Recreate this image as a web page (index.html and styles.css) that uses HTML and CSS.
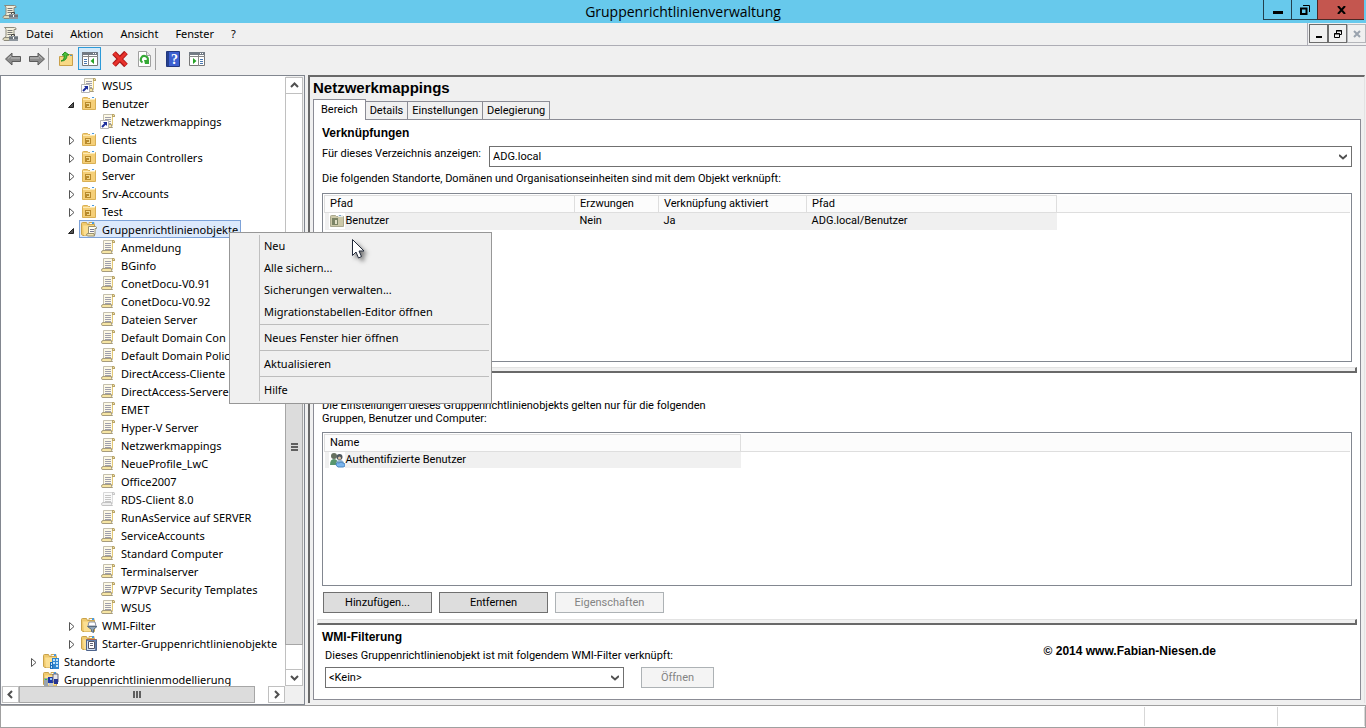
FILE: index.html
```html
<!DOCTYPE html>
<html lang="de">
  <head>
    <meta charset="UTF-8" />
    <meta name="viewport" content="width=device-width, initial-scale=1.0" />
    <title>Gruppenrichtlinienverwaltung</title>
    <link rel="stylesheet" href="styles.css">
  </head>
  <body>
    <svg class="sprite" aria-hidden="true">
      <symbol id="i-console" viewBox="0 0 16 16">
        <path d="M2.500 1.500h10q2 0 1.500 2h-2v9H2q2-1 2-3V3.500q-.5-2-1.500-2z" fill="#f3efdc" stroke="#8d8a7c" />
        <path d="M5.500 4.500h5M5.500 6.500h5M5.500 8.500h4" stroke="#777" />
        <path d="M1 13.500q0-2 2-2h5v3H2z" fill="#ddd8bd" stroke="#8d8a7c" />
        <path d="M9.500 10V8.500h3V10" fill="none" stroke="#444" />
        <path d="M7 10h9v5H7z" fill="#8e969e" /><path d="M7 12h9" stroke="#4d555d" />
        <path d="M11 11h1v2h-1z" fill="#fff" />
      </symbol>
      <symbol id="i-gpo" viewBox="0 0 16 16">
        <path d="M3.500 1.500h9v11h-9z" fill="#fdf9e6" stroke="#c4bfae" />
        <path d="M12 1h2q1.500 1 1 3h-3z" fill="#b9a468" /><path d="M13 2h1v1h-1z" fill="#f1e3ae" />
        <path d="M12.500 4v8" stroke="#e3c877" />
        <path d="M1.500 13.500q0-2 1.500-2h8.500q-.5 2 1 3H3q-1.500 0-1.500-1z" fill="#f6e5a4" stroke="#a79c7c" />
        <path d="M5 4.500h6M5 6.500h6M5 8.500h6M5 10.500h6" stroke="#a09fac" />
      </symbol>
      <symbol id="i-link" viewBox="0 0 16 16">
        <use href="#i-gpo" />
        <path d="M.5 7.500h8v8h-8z" fill="#fff" stroke="#b5b5b5" />
        <path d="M2 14l4-4" stroke="#1d2f9c" stroke-width="2" /><path d="M3 9h4v4z" fill="#1d2f9c" />
      </symbol>
      <symbol id="i-folder" viewBox="0 0 16 16">
        <path d="M.5 2.500q0-1 1-1h4l1 2h7v11H2l-1.500-1z" fill="#f0ca6e" stroke="#c9a24a" />
        <path d="M2 4.500h11v10H3z" fill="#fbdf92" />
        <path d="M8 1.500h5v2H8z" fill="#f7fbff" stroke="#d0a850" /><path d="M11 1h2v2h-2z" fill="#4a9ade" />
      </symbol>
      <symbol id="i-ou" viewBox="0 0 16 16">
        <path d="M1.500 3.500q0-1 1-1h4l1 1h7v11h-13z" fill="#f5cf78" stroke="#d9b055" />
        <path d="M9 2h5v2H9z" fill="#f7fbff" /><path d="M11 2h2v1h-2z" fill="#4a9ade" />
        <path d="M2 4.500h12" stroke="#fdeab4" />
        <path d="M4 7h6v6H4z" fill="#b88a2c" /><path d="M5 8h4v1H5zM8 9h1v3H6v-1h2z" fill="#f3d88c" />
      </symbol>
      <symbol id="i-ougrey" viewBox="0 0 16 16">
        <path d="M1.500 3.500q0-1 1-1h4l1 1h7v10h-13z" fill="#cbc8a8" stroke="#aaa88e" />
        <path d="M9 2h5v2H9z" fill="#e8edf0" /><path d="M10 2h2v1h-2z" fill="#7fa5c0" />
        <path d="M3 5h6v7H3z" fill="#7c8466" /><path d="M6 7h2v4H6z" fill="#e2e0c8" />
      </symbol>
      <symbol id="i-gpofolder" viewBox="0 0 16 16">
        <use href="#i-folder" />
        <path d="M7.500 5.500h7q1.500.5 1 2h-1.500v6H7.500z" fill="#fffdf3" stroke="#99906f" />
        <path d="M9 8.500h4M9 10.500h4" stroke="#777a94" />
        <path d="M5.500 14q0-1.500 1.500-1.500h6q0 1.500.5 2.500h-7z" fill="#f0e4b4" stroke="#99906f" />
      </symbol>
      <symbol id="i-wmi" viewBox="0 0 16 16">
        <use href="#i-folder" />
        <path d="M8 5h6l1 4H7z" fill="#fff" stroke="#8a90a0" />
        <path d="M6.500 9.500h9.500l-3.500 3v3l-2-1v-2z" fill="#8fa4b8" stroke="#596b7e" />
      </symbol>
      <symbol id="i-starter" viewBox="0 0 16 16">
        <use href="#i-folder" />
        <path d="M5.500 4.500h10v11h-10z" fill="#5f7fae" stroke="#4f648c" /><path d="M6 4.500h9" stroke="#b0604e" />
        <path d="M6 6h8v9H6z" fill="#cfdff2" /><path d="M7.500 6.500h6v7h-6z" fill="#fff" stroke="#556" /><path d="M9 8.500h3M9 10.500h3" stroke="#667" />
      </symbol>
      <symbol id="i-sites" viewBox="0 0 16 16">
        <use href="#i-folder" />
        <path d="M9 5h7v11H9z" fill="#2f86cf" /><path d="M7 9h3v7H7z" fill="#1d6db8" />
        <path d="M10 6h2v2h-2zM13 6h2v2h-2zM10 9h2v2h-2zM13 9h2v2h-2zM8 10h1v2H8zM8 13h1v2H8zM13 12h2v2h-2z" fill="#bfe2fa" />
      </symbol>
      <symbol id="i-model" viewBox="0 0 16 16">
        <use href="#i-folder" />
        <path d="M1 7h4v8H1z" fill="#9aa4ae" /><path d="M2 8h2v1H2z" fill="#3c3" />
        <path d="M5 6h5v6H5z" fill="#1c36a8" /><path d="M7 7h2v2H7z" fill="#8fc2ff" />
        <path d="M10 3h5v8h-5z" fill="#e8e8ee" stroke="#667" /><path d="M11 8h4v5h-4z" fill="#26348f" /><path d="M6 12h4v3H6z" fill="#c2c8d0" />
      </symbol>
      <symbol id="i-users" viewBox="0 0 16 16">
        <circle cx="5" cy="4" r="3" fill="#66705f" /><path d="M1 13q0-6 4-6t4 6z" fill="#58966d" />
        <circle cx="10.500" cy="5" r="3" fill="#4e5860" /><circle cx="10.500" cy="6" r="1.500" fill="#dfc4a4" />
        <path d="M7 12q0-4 4-4t4 4z" fill="#8cb0cf" />
        <path d="M7 12q1-2 3-1 2-2 4 0 2 0 2 2t-2 2H9q-2-1-2-3z" fill="#7ab5ed" stroke="#4a86c0" />
      </symbol>
      <symbol id="i-closed" viewBox="0 0 12 12"><path d="M4.500 1.500v8l4.500-4z" fill="#fff" stroke="#555" /></symbol>
      <symbol id="i-open" viewBox="0 0 12 12"><path d="M8.500 3.500v5h-5z" fill="#555" stroke="#222" /></symbol>
      <symbol id="i-up" viewBox="0 0 9 9"><path d="M1 6l3.500-3.500L8 6" fill="none" stroke="#505050" stroke-width="2" /></symbol>
    </svg>

    <div class="window">
      <header class="titlebar">
        <svg class="icon"><use href="#i-console" /></svg>
        <h1>Gruppenrichtlinienverwaltung</h1>
        <div class="win-buttons">
          <button class="win-min" aria-label="Minimieren"><svg width="10" height="10"><path d="M0 6h10v3H0z" /></svg></button>
          <button class="win-restore" aria-label="Verkleinern"><svg width="10" height="10" fill="none" stroke="#000"><path d="M1 3.500h5.500V9H1z" stroke-width="2" /><path d="M3 .5h6.500V7" /></svg></button>
          <button class="win-close" aria-label="Schließen"><svg width="9" height="8"><path d="M1 0l7 8M8 0L1 8" stroke="#000" stroke-width="2" /></svg></button>
        </div>
      </header>

      <nav class="menubar">
        <svg class="icon"><use href="#i-console" /></svg>
        <div class="menus">
          <button>Datei</button>
          <button>Aktion</button>
          <button>Ansicht</button>
          <button>Fenster</button>
          <button>?</button>
        </div>
        <div class="mdi-buttons">
          <button aria-label="Fenster minimieren"><svg width="8" height="8"><path d="M1 6h6v2H1z" /></svg></button>
          <button aria-label="Fenster wiederherstellen"><svg width="8" height="8" fill="none" stroke="#000"><path d="M2.500 3V.5h5v4H6M2 1h6" /><path d="M.5 3.500h5v4h-5zM0 4h6" /></svg></button>
          <button aria-label="Fenster schließen" disabled><svg width="8" height="8"><path d="M1 1l6 6M7 1L1 7" stroke="#9aa3ae" stroke-width="2" /></svg></button>
        </div>
      </nav>

      <div class="toolbar">
        <button aria-label="Zurück"><svg class="icon"><path d="M.5 8L7 2v3.500h8.500v5H7V14z" fill="#8c8c8c" stroke="#5c5c5c" /><path d="M3 7.500L6 5M6 7h9" stroke="#bbb" /></svg></button>
        <button aria-label="Vorwärts"><svg class="icon"><path d="M15.500 8L9 2v3.500H.5v5H9V14z" fill="#8c8c8c" stroke="#5c5c5c" /><path d="M13 7.500L10 5M1 7h9" stroke="#bbb" /></svg></button>
        <span class="tool-sep"></span>
        <button aria-label="Eine Ebene nach oben"><svg class="icon"><path d="M1.500 5.500h6l1-2h6v11h-13z" fill="#f8d986" stroke="#c9a04a" /><path d="M12 4h2v1h-2z" fill="#4a9ade" /><path d="M3 10q4-1 3-6H4l3-3 4 3H9q0 6-6 6z" fill="#4cc03a" stroke="#279020" /></svg></button>
        <button class="pressed" aria-label="Konsolenstruktur einblenden"><svg class="icon"><path d="M.5 1.500h15v13H.5z" fill="#fff" stroke="#777" /><path d="M0 1h16v3H0z" fill="#737b84" /><path d="M11 2h1v1h-1zM13 2h1v1h-1z" fill="#fff" /><path d="M6.500 4v11M0 5.500h16" stroke="#888" /><path d="M2 8.500h3M2 10.500h3M2 12.500h3" stroke="#4a78b0" /><path d="M12 7v6L8.500 10z" fill="#26a326" /></svg></button>
        <span class="tool-gap"></span>
        <button aria-label="Löschen"><svg class="icon"><path d="M2 2l12 12.500M14 1.500L2 14" stroke="#a81616" stroke-width="5" /><path d="M2 2l12 12M14 2L2 14" stroke="#e8322c" stroke-width="3" /></svg></button>
        <button aria-label="Aktualisieren"><svg class="icon"><path d="M2.500.5h8l4 4v11h-12z" fill="#fff" stroke="#a0a0a0" /><path d="M10.500.5v4h4" fill="#e6e6e6" stroke="#a0a0a0" /><path d="M6.500 11.500A3.500 3.500 0 1 1 11.500 10" fill="none" stroke="#35a935" stroke-width="2" /><path d="M8 9h5v4H9z" fill="#35a935" /></svg></button>
        <span class="tool-sep"></span>
        <button aria-label="Hilfe"><svg class="icon"><path d="M1.500.5h13v15h-13z" fill="#3c5fd0" stroke="#22377e" /><path d="M2 1h2v14H2z" fill="#24408f" /><text class="help-mark" x="6" y="13">?</text></svg></button>
        <button aria-label="Aktionsbereich einblenden"><svg class="icon"><path d="M.5 1.500h15v13H.5z" fill="#fff" stroke="#777" /><path d="M0 1h16v3H0z" fill="#737b84" /><path d="M11 2h1v1h-1zM13 2h1v1h-1z" fill="#fff" /><path d="M9.500 4v11M0 5.500h16" stroke="#888" /><path d="M11 8.500h3M11 10.500h3M11 12.500h3" stroke="#4a78b0" /><path d="M4 7v6l3.500-3z" fill="#26a326" /></svg></button>
      </div>

      <main class="content">
        <aside class="tree-pane">
          <ul class="tree" role="tree">
            <li class="lvl2"><span class="label"><svg class="icon"><use href="#i-link" /></svg>WSUS</span></li>
            <li class="lvl2"><svg class="arrow"><use href="#i-open" /></svg><span class="label"><svg class="icon"><use href="#i-ou" /></svg>Benutzer</span></li>
            <li class="lvl3"><span class="label"><svg class="icon"><use href="#i-link" /></svg>Netzwerkmappings</span></li>
            <li class="lvl2"><svg class="arrow"><use href="#i-closed" /></svg><span class="label"><svg class="icon"><use href="#i-ou" /></svg>Clients</span></li>
            <li class="lvl2"><svg class="arrow"><use href="#i-closed" /></svg><span class="label"><svg class="icon"><use href="#i-ou" /></svg>Domain Controllers</span></li>
            <li class="lvl2"><svg class="arrow"><use href="#i-closed" /></svg><span class="label"><svg class="icon"><use href="#i-ou" /></svg>Server</span></li>
            <li class="lvl2"><svg class="arrow"><use href="#i-closed" /></svg><span class="label"><svg class="icon"><use href="#i-ou" /></svg>Srv-Accounts</span></li>
            <li class="lvl2"><svg class="arrow"><use href="#i-closed" /></svg><span class="label"><svg class="icon"><use href="#i-ou" /></svg>Test</span></li>
            <li class="lvl2"><svg class="arrow"><use href="#i-open" /></svg><span class="label selected"><svg class="icon"><use href="#i-gpofolder" /></svg>Gruppenrichtlinienobjekte</span></li>
            <li class="lvl3"><span class="label"><svg class="icon"><use href="#i-gpo" /></svg>Anmeldung</span></li>
            <li class="lvl3"><span class="label"><svg class="icon"><use href="#i-gpo" /></svg>BGinfo</span></li>
            <li class="lvl3"><span class="label"><svg class="icon"><use href="#i-gpo" /></svg>ConetDocu-V0.91</span></li>
            <li class="lvl3"><span class="label"><svg class="icon"><use href="#i-gpo" /></svg>ConetDocu-V0.92</span></li>
            <li class="lvl3"><span class="label"><svg class="icon"><use href="#i-gpo" /></svg>Dateien Server</span></li>
            <li class="lvl3"><span class="label"><svg class="icon"><use href="#i-gpo" /></svg>Default Domain Con</span></li>
            <li class="lvl3"><span class="label"><svg class="icon"><use href="#i-gpo" /></svg>Default Domain Polic</span></li>
            <li class="lvl3"><span class="label"><svg class="icon"><use href="#i-gpo" /></svg>DirectAccess-Cliente</span></li>
            <li class="lvl3"><span class="label"><svg class="icon"><use href="#i-gpo" /></svg>DirectAccess-Servere</span></li>
            <li class="lvl3"><span class="label"><svg class="icon"><use href="#i-gpo" /></svg>EMET</span></li>
            <li class="lvl3"><span class="label"><svg class="icon"><use href="#i-gpo" /></svg>Hyper-V Server</span></li>
            <li class="lvl3"><span class="label"><svg class="icon"><use href="#i-gpo" /></svg>Netzwerkmappings</span></li>
            <li class="lvl3"><span class="label"><svg class="icon"><use href="#i-gpo" /></svg>NeueProfile_LwC</span></li>
            <li class="lvl3"><span class="label"><svg class="icon"><use href="#i-gpo" /></svg>Office2007</span></li>
            <li class="lvl3"><span class="label"><svg class="icon off"><use href="#i-gpo" /></svg>RDS-Client 8.0</span></li>
            <li class="lvl3"><span class="label"><svg class="icon"><use href="#i-gpo" /></svg>RunAsService auf SERVER</span></li>
            <li class="lvl3"><span class="label"><svg class="icon"><use href="#i-gpo" /></svg>ServiceAccounts</span></li>
            <li class="lvl3"><span class="label"><svg class="icon"><use href="#i-gpo" /></svg>Standard Computer</span></li>
            <li class="lvl3"><span class="label"><svg class="icon"><use href="#i-gpo" /></svg>Terminalserver</span></li>
            <li class="lvl3"><span class="label"><svg class="icon"><use href="#i-gpo" /></svg>W7PVP Security Templates</span></li>
            <li class="lvl3"><span class="label"><svg class="icon"><use href="#i-gpo" /></svg>WSUS</span></li>
            <li class="lvl2"><svg class="arrow"><use href="#i-closed" /></svg><span class="label"><svg class="icon"><use href="#i-wmi" /></svg>WMI-Filter</span></li>
            <li class="lvl2"><svg class="arrow"><use href="#i-closed" /></svg><span class="label"><svg class="icon"><use href="#i-starter" /></svg>Starter-Gruppenrichtlinienobjekte</span></li>
            <li class="lvl1"><svg class="arrow"><use href="#i-closed" /></svg><span class="label"><svg class="icon"><use href="#i-sites" /></svg>Standorte</span></li>
            <li class="lvl1"><span class="label"><svg class="icon"><use href="#i-model" /></svg>Gruppenrichtlinienmodellierung</span></li>
          </ul>
          <div class="vscroll">
            <button aria-label="Nach oben"><svg width="9" height="9"><use href="#i-up" /></svg></button>
            <div class="vthumb"><i></i><i></i><i></i></div>
            <button aria-label="Nach unten"><svg class="down" width="9" height="9"><use href="#i-up" /></svg></button>
          </div>
          <div class="hscroll">
            <button aria-label="Nach links"><svg class="left" width="9" height="9"><use href="#i-up" /></svg></button>
            <div class="hthumb"><i></i><i></i><i></i></div>
            <button aria-label="Nach rechts"><svg class="right" width="9" height="9"><use href="#i-up" /></svg></button>
          </div>
        </aside>

        <section class="detail">
          <h2>Netzwerkmappings</h2>
          <div class="tabs" role="tablist">
            <button class="active" role="tab">Bereich</button>
            <button role="tab">Details</button>
            <button role="tab">Einstellungen</button>
            <button role="tab">Delegierung</button>
          </div>
          <div class="panel">
            <div class="block links">
              <h3>Verknüpfungen</h3>
              <div class="field">
                <label for="location">Für dieses Verzeichnis anzeigen:</label>
                <select id="location"><option>ADG.local</option></select>
              </div>
              <p>Die folgenden Standorte, Domänen und Organisationseinheiten sind mit dem Objekt verknüpft:</p>
              <div class="list">
                <table>
                  <colgroup><col class="c-path"><col class="c-forced"><col class="c-active"><col class="c-path"><col></colgroup>
                  <thead>
                    <tr><th>Pfad</th><th>Erzwungen</th><th>Verknüpfung aktiviert</th><th>Pfad</th><td></td></tr>
                  </thead>
                  <tbody>
                    <tr>
                      <td><span class="item"><svg class="icon"><use href="#i-ougrey" /></svg>Benutzer</span></td>
                      <td>Nein</td><td>Ja</td><td>ADG.local/Benutzer</td><td></td>
                    </tr>
                  </tbody>
                </table>
              </div>
            </div>
            <div class="splitter"></div>
            <div class="block security">
              <p>Die Einstellungen dieses Gruppenrichtlinienobjekts gelten nur für die folgenden<br>Gruppen, Benutzer und Computer:</p>
              <div class="list">
                <table>
                  <colgroup><col class="c-name"><col></colgroup>
                  <thead><tr><th>Name</th><td></td></tr></thead>
                  <tbody>
                    <tr><td><span class="item"><svg class="icon"><use href="#i-users" /></svg>Authentifizierte Benutzer</span></td><td></td></tr>
                  </tbody>
                </table>
              </div>
              <div class="actions">
                <button>Hinzufügen...</button>
                <button>Entfernen</button>
                <button disabled>Eigenschaften</button>
              </div>
            </div>
            <div class="splitter"></div>
            <div class="block wmi">
              <h3>WMI-Filterung</h3>
              <label for="wmi-filter">Dieses Gruppenrichtlinienobjekt ist mit folgendem WMI-Filter verknüpft:</label>
              <div class="wmi-row">
                <select id="wmi-filter"><option>&lt;Kein&gt;</option></select>
                <button disabled>Öffnen</button>
              </div>
              <div class="copyright">© 2014 www.Fabian-Niesen.de</div>
            </div>
          </div>
        </section>
      </main>

      <footer class="statusbar"><span></span><span></span><span></span></footer>
    </div>

    <div class="context-menu" role="menu">
      <button role="menuitem">Neu</button>
      <button role="menuitem">Alle sichern...</button>
      <button role="menuitem">Sicherungen verwalten...</button>
      <button role="menuitem">Migrationstabellen-Editor öffnen</button>
      <hr>
      <button role="menuitem">Neues Fenster hier öffnen</button>
      <hr>
      <button role="menuitem">Aktualisieren</button>
      <hr>
      <button role="menuitem">Hilfe</button>
    </div>
    <svg class="cursor" width="18" height="24" viewBox="0 0 18 24">
      <path d="M.5.500v16l3.500-3.500 2.500 6 3-1.500-2.500-5.500h5z" fill="#fff" stroke="#222a3a" />
    </svg>
  </body>
</html>
```
FILE: styles.css
```css
* {
  box-sizing: border-box;
}
body {
  margin: 0;
  font-family: "Noto Sans", "Open Sans", sans-serif;
  font-size: 11px;
  color: #000;
  background: #f0f0f0;
}
button,
select {
  margin: 0;
  padding: 0;
  border: 0;
  border-radius: 0;
  background: none;
  font: inherit;
  color: inherit;
}
h1,
h2,
h3,
p {
  margin: 0;
}
.sprite {
  position: absolute;
  width: 0;
  height: 0;
}
.icon {
  width: 16px;
  height: 16px;
  flex: none;
}
.window {
  display: flex;
  flex-direction: column;
  height: 100vh;
}

/* title bar */
.titlebar {
  display: grid;
  grid-template-columns: 103px 1fr 103px;
  height: 23px;
  background: #67c9ec;
}
.titlebar .icon {
  margin: 4px 2px;
}
.titlebar h1 {
  font-family: "Open Sans", "Noto Sans", sans-serif;
  font-size: 14px;
  font-weight: normal;
  line-height: 23px;
  text-align: center;
}
.win-buttons {
  display: flex;
  height: 20px;
  margin-right: 2px;
}
.win-buttons button {
  display: flex;
  align-items: center;
  justify-content: center;
  flex: 28;
  border: 1px solid #23404d;
  border-top: 0;
  border-right: 0;
}
.win-buttons .win-restore {
  flex: 26;
}
.win-buttons .win-close {
  flex: 47;
  background: #c4564f;
  border-color: #4b2826;
}

/* menu bar */
.menubar {
  display: flex;
  height: 23px;
  border-bottom: 1px solid #adadb5;
}
.menubar .icon {
  margin: 3px 2px;
}
.menus {
  display: flex;
  flex: 1;
  gap: 17px;
  padding-left: 6px;
  border-right: 1px solid #adadb5;
}
.menus button {
  line-height: 22px;
}
.mdi-buttons {
  display: flex;
  height: 19px;
  margin: 1px 0 0 1px;
}
.mdi-buttons button {
  display: flex;
  align-items: center;
  justify-content: center;
  width: 19px;
  border: 1px solid #6d6d6d;
}
.mdi-buttons button:disabled {
  border-color: #b4b6ba;
}

/* toolbar */
.toolbar {
  display: flex;
  align-items: center;
  gap: 1px;
  height: 29px;
  padding: 0 1px 4px;
}
.toolbar button {
  display: flex;
  align-items: center;
  justify-content: center;
  width: 23px;
  height: 23px;
}
.toolbar .pressed {
  background: #d5e9f8;
  border: 1px solid #2d9ad8;
}
.tool-sep {
  width: 1px;
  height: 22px;
  margin: 0 4px 0 -1px;
  background: #a0a0a0;
}
.tool-gap {
  width: 5px;
}
.help-mark {
  font-family: "Liberation Serif", serif;
  font-size: 14px;
  font-weight: bold;
  fill: #fff;
}

/* console tree */
.content {
  display: flex;
  flex: 1;
  min-height: 0;
}
.tree-pane {
  display: grid;
  grid-template-columns: 1fr 18px;
  grid-template-rows: 1fr 18px;
  width: 305px;
  border: 1px solid #828790;
}
.tree {
  margin: 0;
  padding: 0;
  list-style: none;
  overflow: hidden;
  background: #fff;
}
.tree li {
  display: flex;
  height: 18px;
}
.lvl1 {
  padding-left: 40px;
}
.lvl2 {
  padding-left: 78px;
}
.lvl3 {
  padding-left: 97px;
}
.arrow {
  flex: none;
  width: 12px;
  height: 12px;
  margin: 5px 2px 0 -14px;
}
.label {
  display: flex;
  align-items: center;
  flex: none;
  gap: 5px;
  height: 18px;
  padding: 0 2px 0 1px;
  border: 1px solid transparent;
  white-space: nowrap;
}
.label.selected {
  background: #dce9fc;
  border-color: #7da2d8;
}
.off {
  opacity: 0.6;
  filter: grayscale(1);
}
.vscroll,
.hscroll {
  display: flex;
  background: #fff;
}
.vscroll {
  flex-direction: column;
  border: 1px solid #c0c0c0;
  border-top: 0;
  border-bottom: 0;
  margin: 1px 1px 0 -1px;
}
.vscroll button,
.hscroll button {
  display: flex;
  align-items: center;
  justify-content: center;
  flex: none;
  width: 16px;
  height: 17px;
  border: 1px solid #c0c0c0;
  border-width: 1px 0;
}
.vthumb,
.hthumb {
  display: flex;
  align-items: center;
  justify-content: center;
  gap: 1px;
  background: #dcdcdc;
  border: 1px solid #a6a6a6;
}
.vthumb {
  flex-direction: column;
  flex: 1;
  margin: 155px -1px 24px;
}
.vthumb i {
  width: 7px;
  height: 2px;
  background: #606060;
}
.hscroll {
  margin: 0 1px;
}
.hscroll button {
  width: 17px;
  height: 17px;
  border-width: 1px;
}
.hthumb {
  flex: 1;
  height: 17px;
  margin-right: 13px;
}
.hthumb i {
  width: 2px;
  height: 7px;
  background: #606060;
}
.down {
  transform: rotate(180deg);
}
.left {
  transform: rotate(-90deg);
}
.right {
  transform: rotate(90deg);
}

/* detail pane */
.detail {
  display: flex;
  flex-direction: column;
  flex: 1;
  min-width: 0;
  margin: 0 1px 2px 3px;
  padding: 1px 3px 3px;
  border: 2px solid #696969;
  border-width: 2px 1px 0 2px;
  border-right-color: #e3e3e3;
  font-family: Roboto, "Liberation Sans", sans-serif;
}
.detail h2,
.detail h3,
.copyright {
  font-family: "Liberation Sans", Arial, sans-serif;
}
.detail h2 {
  font-size: 15px;
  line-height: 20px;
}
.tabs {
  display: flex;
  align-items: flex-end;
  height: 21px;
}
.tabs button {
  height: 18px;
  padding: 0 4px;
  border: 1px solid #8b8c95;
  border-width: 1px 1px 0 0;
}
.tabs .active {
  height: 21px;
  margin-bottom: -1px;
  padding: 0 7px 2px;
  border-left-width: 1px;
  background: #fff;
  z-index: 1;
}
.panel {
  display: flex;
  flex-direction: column;
  flex: 1;
  border: 1px solid #8b8c95;
  background: #fff;
}
.block {
  display: flex;
  flex-direction: column;
  padding: 0 8px;
}
.detail h3 {
  font-size: 12px;
  line-height: 16px;
}
.links {
  flex: 1 1 240px;
  padding-top: 5px;
}
.field {
  display: flex;
  justify-content: space-between;
  gap: 8px;
  padding-top: 5px;
}
.field label {
  line-height: 16px;
}
select {
  height: 21px;
  padding-left: 3px;
  border: 1px solid #707070;
  appearance: none;
  background: #fff url("data:image/svg+xml,%3Csvg xmlns='http://www.w3.org/2000/svg' width='8' height='6'%3E%3Cpath d='M0 1l4 3.500L8 1' fill='none' stroke='%23505050' stroke-width='2'/%3E%3C/svg%3E") no-repeat right 4px center;
}
.field select {
  flex: 1;
}
.links p {
  padding: 4px 0 6px;
  line-height: 16px;
}
.list {
  flex: 1;
  padding: 1px;
  border: 1px solid #828790;
}
table {
  width: 100%;
  table-layout: fixed;
  border-collapse: collapse;
}
th,
td {
  height: 17px;
  padding: 0 5px;
  text-align: left;
  font-weight: normal;
  line-height: 16px;
}
thead tr {
  background: #fcfcfc;
  border-bottom: 1px solid #dedede;
}
th {
  border: 1px solid #dedede;
}
tbody td:not(:last-child) {
  background: #f0f0f0;
}
.c-path {
  width: 250px;
}
.c-forced {
  width: 84px;
}
.c-active {
  width: 148px;
}
.c-name {
  width: 416px;
}
.item {
  display: flex;
  align-items: center;
  gap: 1px;
  margin-left: -1px;
}
.item .icon {
  background: #fff;
}
.splitter {
  height: 6px;
  margin: 0 3px;
  border: 1px solid #696969;
  border-width: 1px 2px 2px 1px;
  border-top-color: #e3e3e3;
  border-left-color: #e3e3e3;
  background: #f0f0f0;
}
.links + .splitter {
  margin-top: 5px;
}
.security {
  flex: 1 1 245px;
  padding-top: 26px;
}
.security p {
  padding-bottom: 7px;
  line-height: 13px;
}
.actions {
  display: flex;
  gap: 7px;
  padding: 6px 1px;
}
.actions button,
.wmi-row button {
  width: 109px;
  height: 21px;
  border: 1px solid #707070;
  background: #dddddd;
}
.actions button:disabled,
.wmi-row button:disabled {
  border-color: #adb2b5;
  background: #f4f4f4;
  color: #838383;
}
.wmi {
  position: relative;
  padding: 4px 11px 11px;
}
.wmi h3 {
  margin-left: -3px;
}
.wmi label {
  padding: 3px 0;
  line-height: 16px;
}
.wmi-row {
  display: flex;
  gap: 17px;
}
.wmi-row select {
  width: 299px;
}
.wmi-row button {
  width: 73px;
}
.copyright {
  position: absolute;
  top: 19px;
  right: 144px;
  font-size: 12px;
  font-weight: bold;
}

/* status bar */
.statusbar {
  display: grid;
  grid-template-columns: 1fr 133px 87px;
  height: 23px;
  padding: 1px 0;
  border: 1px solid #a0a0a0;
  background: #fff;
}
.statusbar span {
  border-right: 1px solid #d7d7d7;
}

/* context menu */
.context-menu {
  position: absolute;
  top: 232px;
  left: 229px;
  width: 263px;
  padding: 2px;
  border: 1px solid #979797;
  background: linear-gradient(#c0c0c0, #c0c0c0) no-repeat 29px 2px / 1px calc(100% - 4px) #f0f0f0;
}
.context-menu button {
  display: block;
  width: 100%;
  height: 22px;
  padding: 0 0 2px 32px;
  text-align: left;
}
.context-menu hr {
  height: 1px;
  margin: 1px 0 2px 28px;
  border: 0;
  background: #bdbdbd;
}
.cursor {
  position: absolute;
  top: 239px;
  left: 352px;
  filter: drop-shadow(3px 3px 2px rgba(0, 0, 0, 0.5));
}
```
